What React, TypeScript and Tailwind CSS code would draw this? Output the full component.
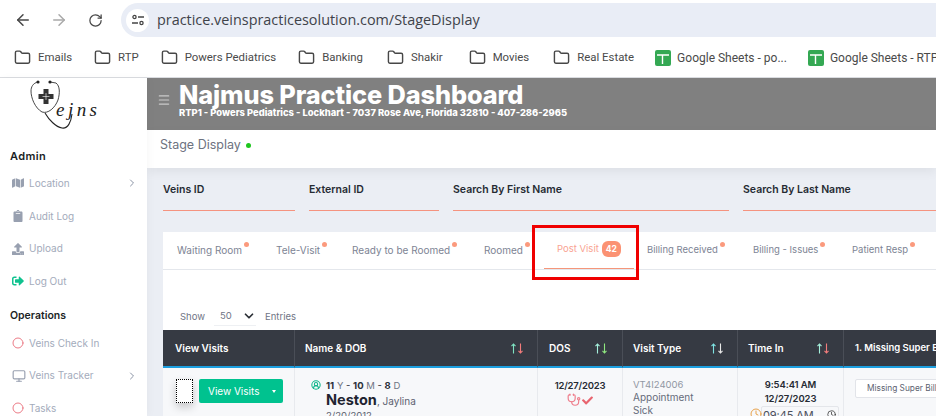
import { ArrowLeft, ArrowRight, ChevronDown, ChevronRight, Circle, CircleUserRound, Clock, Folder, Menu, Monitor, RotateCw, Stethoscope } from "lucide-react";
import { FaCheck, FaClipboard, FaMap, FaSignOutAlt, FaUpload } from "react-icons/fa";

const bookmarks = [
  { label: "Emails", gap: "mr-[22px]" },
  { label: "RTP", gap: "mr-[22px]" },
  { label: "Powers Pediatrics", gap: "mr-[22px]" },
  { label: "Banking", gap: "mr-[24px]" },
  { label: "Shakir", gap: "mr-[26px]" },
  { label: "Movies", gap: "mr-[24px]" },
  { label: "Real Estate", gap: "mr-[21px]" },
];

const tabs = [
  { label: "Waiting Room", w: "w-[99px]" },
  { label: "Tele-Visit", w: "w-[76px]" },
  { label: "Ready to be Roomed", w: "w-[132px]" },
  { label: "Roomed", w: "w-[65px]" },
];

const tabsRight = [
  { label: "Billing Received", w: "w-[106px]" },
  { label: "Billing - Issues", w: "w-[99px]" },
  { label: "Patient Resp", w: "w-[90px]" },
];

function Logo() {
  return (
    <svg width="72" height="54" viewBox="0 0 72 54" className="ml-[29px] mb-[2px]" fill="none">
      <path d="M9 4C4 5 2 9 2 13C2 20 6 30 13 34C19 36 26 30 29 22C31 15 31 8 27 5L21 4" stroke="#333" strokeWidth="0.9" />
      <circle cx="9" cy="4" r="1.6" fill="#222" />
      <circle cx="21" cy="4" r="1.6" fill="#222" />
      <path d="M14.5 11h5v5h5v5h-5v5h-5v-5h-5v-5h5z" fill="#333" />
      <path d="M17 15v7M13.5 18.5h7" stroke="#fff" strokeWidth="0.6" />
      <path d="M16 35C20 42 27 49 33 50C39 51 42 44 43 36" stroke="#222" strokeWidth="1.1" />
      <text x="27" y="38" fontFamily="'Liberation Serif', serif" fontStyle="italic" fontSize="19" fill="#222" textLength="41">ejns</text>
    </svg>
  );
}

function NavItem({ icon, label, arrow }: { icon: React.ReactNode; label: string; arrow?: boolean }) {
  return (
    <div className="flex items-center h-[32.7px] pl-3 pr-[9px] text-[10px] text-[#a3abbb]">
      <span className="w-[17px] flex justify-start">{icon}</span>
      <span>{label}</span>
      {arrow && <ChevronRight size={12} className="ml-auto text-[#8a93a5]" />}
    </div>
  );
}

function SortArrows({ up, down }: { up: string; down: string }) {
  return (
    <span className="flex gap-[1px] ml-auto mt-[2px]">
      <svg width="5" height="11" viewBox="0 0 5 11" fill="none" stroke="currentColor" strokeWidth="1.1" className={up}>
        <path d="M2.5 10.5V1M.5 3.2l2-2.2 2 2.2" />
      </svg>
      <svg width="5" height="11" viewBox="0 0 5 11" fill="none" stroke="currentColor" strokeWidth="1.1" className={`ml-[1px] ${down}`}>
        <path d="M2.5 .5V10M.5 7.8l2 2.2 2-2.2" />
      </svg>
    </span>
  );
}

function Field({ label, w }: { label: string; w: string }) {
  return (
    <div className={`${w} shrink-0 h-[29px] border-b border-[#f5937f] text-[10.5px] font-semibold text-[#262b33]`}>{label}</div>
  );
}

function SheetsIcon() {
  return (
    <svg width="16" height="16" viewBox="0 0 16 16">
      <rect width="16" height="16" rx="2" fill="#34a853" />
      <path d="M2 5h12M7.5 5v9" stroke="#fff" strokeWidth="1.4" />
    </svg>
  );
}

export default function App() {
  return (
    <div className="w-[936px] h-[416px] overflow-hidden bg-white relative font-['Inter',sans-serif]">
      {/* browser chrome */}
      <div className="h-[38px] flex items-center pl-[14px] pt-[2px]">
        <ArrowLeft size={18} className="text-[#474747]" />
        <ArrowRight size={18} className="ml-[18px] text-[#a9a9a9]" />
        <RotateCw size={15} className="ml-[20px] text-[#474747]" />
        <div className="ml-[18px] flex-1 h-[34px] bg-[#e9edf6] rounded-l-full flex items-center pl-[5px]">
          <span className="w-[23px] h-[23px] rounded-full bg-white flex items-center justify-center">
            <svg width="14" height="14" viewBox="0 0 14 14" fill="none" stroke="#444" strokeWidth="1.3">
              <circle cx="3.5" cy="4" r="1.6" />
              <path d="M7 4h6M1 10h6" />
              <circle cx="10.5" cy="10" r="1.6" />
            </svg>
          </span>
          <span className="ml-[8px] text-[14.4px] text-[#3f434a] font-['Open_Sans',sans-serif]">practice.veinspracticesolution.com/StageDisplay</span>
        </div>
      </div>
      <div className="h-[40px] flex items-center pl-[14px] border-b border-[#dadce0] text-[11.4px] text-[#4a4a4a] font-['Roboto',sans-serif] whitespace-nowrap">
        {bookmarks.map((b) => (
          <div key={b.label} className={`flex items-center gap-[7px] ${b.gap}`}>
            <Folder size={17} className="text-[#474747]" />
            <span>{b.label}</span>
          </div>
        ))}
        <div className="flex items-center gap-[6px] mr-[21px] text-[12px]">
          <SheetsIcon />
          <span>Google Sheets - po...</span>
        </div>
        <div className="flex items-center gap-[6px] text-[12px]">
          <SheetsIcon />
          <span>Google Sheets - RTP</span>
        </div>
      </div>

      <div className="flex h-[338px]">
        {/* sidebar */}
        <aside className="w-[147px] shrink-0 bg-white relative z-10 shadow-[2px_0_8px_rgba(0,0,0,0.03)]">
          <Logo />
          <div className="mt-[16px] pl-[10px] text-[11px] tracking-[0.4px] leading-[16px] font-semibold text-[#1c1f26]">Admin</div>
          <div className="mt-[3px]">
            <NavItem icon={<FaMap size={12} className="text-[#98a0b0]" />} label="Location" arrow />
            <NavItem icon={<FaClipboard size={12} className="text-[#98a0b0]" />} label="Audit Log" />
            <NavItem icon={<FaUpload size={12} className="text-[#98a0b0]" />} label="Upload" />
            <NavItem icon={<FaSignOutAlt size={12} className="text-[#0fc28f]" />} label="Log Out" />
          </div>
          <div className="mt-[10px] pl-[10px] text-[10.5px] leading-[16px] font-semibold text-[#1c1f26]">Operations</div>
          <div className="mt-[3px]">
            <NavItem icon={<Circle size={12} className="text-[#ec7b86]" />} label="Veins Check In" />
            <NavItem icon={<Monitor size={14} className="text-[#98a0b0]" />} label="Veins Tracker" arrow />
            <NavItem icon={<Circle size={12} className="text-[#ec7b86]" />} label="Tasks" />
          </div>
        </aside>

        {/* main */}
        <main className="flex-1 min-w-0 bg-[#ebeef4]">
          <header className="h-[52px] bg-[#808080] flex pl-[10px] pt-[4px]">
            <Menu size={14} className="text-[#c9c9c9] mt-[11px]" />
            <div className="ml-[8px] text-white">
              <div className="text-[25.3px] leading-[26px] font-extrabold -tracking-[0.1px] whitespace-nowrap">Najmus Practice Dashboard</div>
              <div className="text-[9.4px] leading-[10px] font-extrabold whitespace-nowrap">RTP1 - Powers Pediatrics - Lockhart - 7037 Rose Ave, Florida 32810 - 407-286-2965</div>
            </div>
          </header>
          <div className="h-[38px] bg-white pl-[13px] pt-[6px] text-[12.5px] text-[#6d7280] flex items-start gap-[5px] shadow-[0_4px_10px_rgba(0,0,0,0.06)]">
            <span>Stage Display</span>
            <span className="w-[5px] h-[5px] rounded-full bg-[#1ec61e] mt-[7px]" />
          </div>
          <div className="h-[64px] flex gap-[14px] pl-[16px] pt-[14px] items-start overflow-hidden">
            <Field label="Veins ID" w="w-[132px]" />
            <Field label="External ID" w="w-[130px]" />
            <Field label="Search By First Name" w="w-[276px]" />
            <Field label="Search By Last Name" w="w-[200px]" />
          </div>

          <section className="ml-[16px] bg-white h-[184px] overflow-hidden">
            <div className="h-[38px] flex border-b border-[#e4e7ec] pl-[14px] text-[10px] text-[#7d8494] whitespace-nowrap">
              {tabs.map((t) => (
                <div key={t.label} className={`${t.w} shrink-0 flex items-start pt-[11px]`}>
                  <span>{t.label}</span>
                  <span className="w-[5px] h-[5px] rounded-full bg-[#fb9a7d] -mt-[1px] ml-[2px]" />
                </div>
              ))}
              <div className="w-[90px] -ml-[5px] shrink-0 h-[37px] border-b border-[#f5967a] flex items-center pl-[13px] pb-[2px] text-[9.5px] text-[#f9a392]">
                <span>Post Visit</span>
                <span className="ml-[3px] w-[19px] h-[16px] justify-center rounded-[6px] bg-[#fb9273] text-white text-[8.5px] font-bold flex items-center">42</span>
              </div>
              <div className="ml-[13px] flex text-[9.5px]">
                {tabsRight.map((t) => (
                  <div key={t.label} className={`${t.w} shrink-0 flex items-start pt-[11px]`}>
                    <span>{t.label}</span>
                    <span className="w-[5px] h-[5px] rounded-full bg-[#fb9a7d] -mt-[1px] ml-[2px]" />
                  </div>
                ))}
              </div>
            </div>

            <div className="h-[60px] flex items-end pl-[17px] pb-[6px] text-[9.5px] text-[#6f7585]">
              <span>Show</span>
              <span className="ml-[9px] w-[42px] flex items-center border-b border-[#eef0f3] pb-[2px] -mb-[2px]">
                <span className="ml-[6px]">50</span>
                <ChevronDown size={14} strokeWidth={3} className="ml-auto text-[#2b2f36]" />
              </span>
              <span className="ml-[9px]">Entries</span>
            </div>

            <div className="grid grid-cols-[132px_243px_85px_115px_106px_1fr] text-[10px]">
              <div className="h-[38px] bg-[#363a43] border-b-2 border-[#1c9fe0] border-r border-r-[#4a4e57] text-white font-semibold flex items-center pl-[12px]">View Visits</div>
              <div className="h-[38px] bg-[#363a43] border-b-2 border-[#1c9fe0] border-r border-r-[#4a4e57] text-white font-semibold flex items-start pt-[11px] pl-[10px] pr-[14px]">
                Name &amp; DOB
                <SortArrows up="text-[#7fe3c2]" down="text-[#f37c7c]" />
              </div>
              <div className="h-[38px] bg-[#363a43] border-b-2 border-[#1c9fe0] border-r border-r-[#4a4e57] text-white font-semibold flex items-start pt-[11px] pl-[11px] pr-[15px]">
                DOS
                <SortArrows up="text-[#a5f0dc]" down="text-[#8fe87f]" />
              </div>
              <div className="h-[38px] bg-[#363a43] border-b-2 border-[#1c9fe0] border-r border-r-[#4a4e57] text-white font-semibold flex items-start pt-[11px] pl-[10px] pr-[14px]">
                Visit Type
                <SortArrows up="text-[#7fe3e3]" down="text-[#e8e8e8]" />
              </div>
              <div className="h-[38px] bg-[#363a43] border-b-2 border-[#1c9fe0] border-r border-r-[#4a4e57] text-white font-semibold flex items-start pt-[11px] pl-[10px] pr-[14px]">
                Time In
                <SortArrows up="text-[#a5f0dc]" down="text-[#f37c7c]" />
              </div>
              <div className="h-[38px] bg-[#363a43] border-b-2 border-[#1c9fe0] text-white text-[9.5px] font-semibold flex items-center pl-[11px] whitespace-nowrap overflow-hidden">1. Missing Super Bill</div>

              <div className="h-[50px] bg-[#f7f8fa] border-r border-[#e8eaee] flex items-start pt-[11px] pl-[13px]">
                <span className="w-[17px] h-[24px] bg-white border border-dotted border-black shadow-[0_4px_8px_rgba(0,0,0,0.2)]" />
                <span className="ml-[6px] w-[84px] h-[24px] bg-[#00c28f] rounded-[2px] text-white flex items-center pl-[9px] text-[10px]">
                  View Visits
                  <span className="ml-auto mr-[7px] border-x-[2.5px] border-x-transparent border-t-[3px] border-t-white" />
                </span>
              </div>
              <div className="h-[50px] bg-[#f7f8fa] border-r border-[#e8eaee] flex items-start pt-[11px] pl-[16px]">
                <CircleUserRound size={10} strokeWidth={2.5} className="text-[#0cb58a] mt-[1px]" />
                <div className="ml-[5px] text-[#2a2f38]">
                  <div className="leading-[13px] text-[9.5px]"><b>11</b> <span className="text-[#6e7482]">Y</span> - <b>10</b> <span className="text-[#6e7482]">M</span> - <b>8</b> <span className="text-[#6e7482]">D</span></div>
                  <div className="leading-[16px] text-[#1f2430]">
                    <span className="text-[14.5px] font-bold">Neston</span>
                    <span className="text-[10px] text-[#5c6270]">, Jaylina</span>
                  </div>
                  <div className="leading-[13px] text-[9.5px] text-[#5c6270]">2/20/2012</div>
                </div>
              </div>
              <div className="h-[50px] bg-[#f7f8fa] border-r border-[#e8eaee] flex flex-col items-center pt-[11px]">
                <div className="font-semibold text-[9.5px] -tracking-[0.2px] leading-[13px] text-[#262b33]">12/27/2023</div>
                <div className="flex items-center gap-[1px] mt-[1px]">
                  <Stethoscope size={14} className="text-[#ee7d8b]" />
                  <FaCheck size={11} className="text-[#e8646f]" />
                </div>
              </div>
              <div className="h-[50px] bg-[#f7f8fa] border-r border-[#e8eaee] pl-[10px] pt-[10px] text-[10px] leading-[13px] text-[#666c7a]">
                <div className="text-[9.5px] text-[#9197a3]">VT4I24006</div>
                <div>Appointment</div>
                <div>Sick</div>
              </div>
              <div className="h-[50px] bg-[#f7f8fa] border-r border-[#e8eaee] flex flex-col items-center pt-[10px] text-[9.5px] -tracking-[0.1px] leading-[14px] font-semibold text-[#262b33]">
                <div>9:54:41 AM</div>
                <div>12/27/2023</div>
                <div className="ml-[19px] w-[78px] h-[20px] border border-[#e4e6ea] rounded-[2px] flex items-start pl-[1px] pt-[1px] font-normal text-[11px] text-[#4a4f5a] relative">
                  <Clock size={12} className="absolute -left-[12px] top-[1px] text-[#e9a34c]" />
                  09:45 AM
                  <Clock size={9} className="ml-auto mr-[2px] mt-[2px] text-[#333]" />
                </div>
              </div>
              <div className="h-[50px] bg-[#f7f8fa] pl-[11px] pt-[11px] overflow-hidden">
                <div className="w-[100px] h-[19px] bg-white border border-[#e2e4e9] rounded-[2px] flex items-center pl-[11px] text-[8.3px] text-[#5c6270] whitespace-nowrap">Missing Super Bill</div>
              </div>
            </div>
          </section>
        </main>
      </div>

      {/* red highlight drawn over the Post Visit tab */}
      <div className="absolute left-[532px] top-[225px] w-[107px] h-[55px] border-[3px] border-[#f00000] pointer-events-none" />
    </div>
  );
}
